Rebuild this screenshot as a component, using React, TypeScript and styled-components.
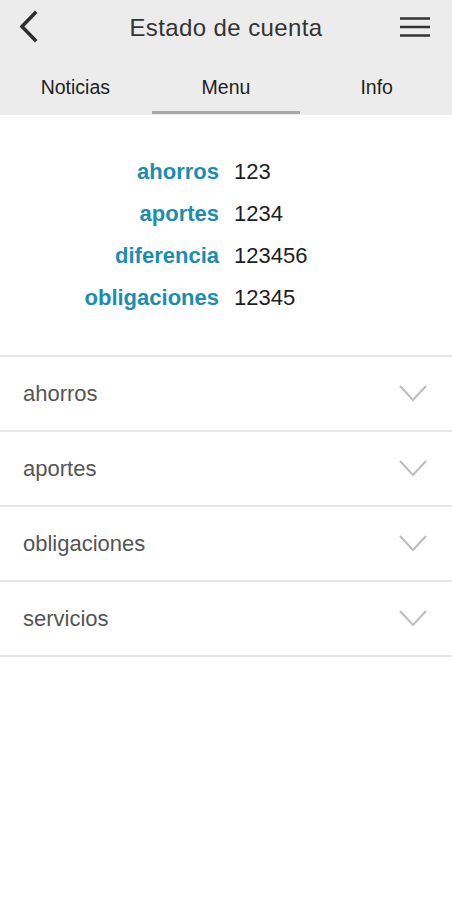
import React, { useState } from "react";
import styled, { createGlobalStyle } from "styled-components";

const GlobalStyle = createGlobalStyle`
  html, body {
    margin: 0;
    padding: 0;
    background: #ffffff;
    font-family: "Liberation Sans", Arial, Helvetica, sans-serif;
  }
  * { box-sizing: border-box; }
`;

const Page = styled.div`
  width: 452px;
  min-height: 900px;
  background: #ffffff;
  display: flex;
  flex-direction: column;
`;

const Header = styled.header`
  background: #ececec;
  display: flex;
  flex-direction: column;
`;

const TopBar = styled.div`
  height: 56px;
  display: grid;
  grid-template-columns: 56px 1fr 56px;
  align-items: center;
`;

const IconButton = styled.button`
  border: none;
  background: transparent;
  padding: 0;
  height: 56px;
  display: flex;
  align-items: center;
  justify-content: center;
  cursor: pointer;
`;

const Title = styled.h1`
  margin: 0;
  text-align: center;
  font-size: 24px;
  font-weight: 400;
  letter-spacing: 0.4px;
  color: #333333;
`;

const TabBar = styled.nav`
  height: 59px;
  display: grid;
  grid-template-columns: 1fr 1fr 1fr;
  padding-bottom: 1px;
`;

const Tab = styled.button<{ $active?: boolean }>`
  border: none;
  background: transparent;
  padding: 19px 0 0;
  height: 58px;
  font-family: inherit;
  font-size: 19.5px;
  line-height: 24px;
  color: #222222;
  display: flex;
  justify-content: center;
  align-items: flex-start;
  border-bottom: 3px solid ${(p) => (p.$active ? "#a8a8a8" : "transparent")};
  margin: 0 1px;
  cursor: pointer;
`;

const Summary = styled.section`
  padding: 36px 0;
  display: grid;
  grid-template-columns: 1fr 1fr;
  grid-auto-rows: 42px;
  align-items: center;
`;

const SummaryLabel = styled.div`
  text-align: right;
  padding-right: 7px;
  font-size: 22px;
  font-weight: 700;
  color: #1b8db1;
`;

const SummaryValue = styled.div`
  padding-left: 8px;
  font-size: 22px;
  color: #1e1e1e;
`;

const List = styled.div`
  display: flex;
  flex-direction: column;
  border-top: 2px solid #e8e8e8;
`;

const Row = styled.button`
  height: 75px;
  border: none;
  border-bottom: 2px solid #e8e8e8;
  background: #ffffff;
  display: flex;
  align-items: center;
  justify-content: space-between;
  padding: 0 24px 0 23px;
  font-family: inherit;
  font-size: 22px;
  color: #555555;
  text-align: left;
  cursor: pointer;
`;

const BackIcon = () => (
  <svg width="56" height="56" viewBox="0 0 56 56">
    <polyline points="35,13 22,26.5 35,40" fill="none" stroke="#2e2e2e" strokeWidth="3.5" strokeLinecap="square" />
  </svg>
);

const MenuIcon = () => (
  <svg width="56" height="56" viewBox="0 0 56 56">
    <g stroke="#333" strokeWidth="2.5">
      <line x1="4" y1="18.5" x2="34" y2="18.5" />
      <line x1="4" y1="27" x2="34" y2="27" />
      <line x1="4" y1="35.5" x2="34" y2="35.5" />
    </g>
  </svg>
);

const Chevron = () => (
  <svg width="30" height="20" viewBox="0 0 30 20">
    <polyline points="2,2 15,16 28,2" fill="none" stroke="#bdbdbd" strokeWidth="2" />
  </svg>
);

const summary = [
  { label: "ahorros", value: "123" },
  { label: "aportes", value: "1234" },
  { label: "diferencia", value: "123456" },
  { label: "obligaciones", value: "12345" },
];

const sections = ["ahorros", "aportes", "obligaciones", "servicios"];

export default function App() {
  const [tab, setTab] = useState(1);
  const tabs = ["Noticias", "Menu", "Info"];
  return (
    <Page>
      <GlobalStyle />
      <Header>
        <TopBar>
          <IconButton aria-label="Atrás">
            <BackIcon />
          </IconButton>
          <Title>Estado de cuenta</Title>
          <IconButton aria-label="Menú">
            <MenuIcon />
          </IconButton>
        </TopBar>
        <TabBar>
          {tabs.map((t, i) => (
            <Tab key={t} $active={i === tab} onClick={() => setTab(i)}>
              {t}
            </Tab>
          ))}
        </TabBar>
      </Header>
      <Summary>
        {summary.map((s) => (
          <React.Fragment key={s.label}>
            <SummaryLabel>{s.label}</SummaryLabel>
            <SummaryValue>{s.value}</SummaryValue>
          </React.Fragment>
        ))}
      </Summary>
      <List>
        {sections.map((s) => (
          <Row key={s}>
            <span>{s}</span>
            <Chevron />
          </Row>
        ))}
      </List>
    </Page>
  );
}
